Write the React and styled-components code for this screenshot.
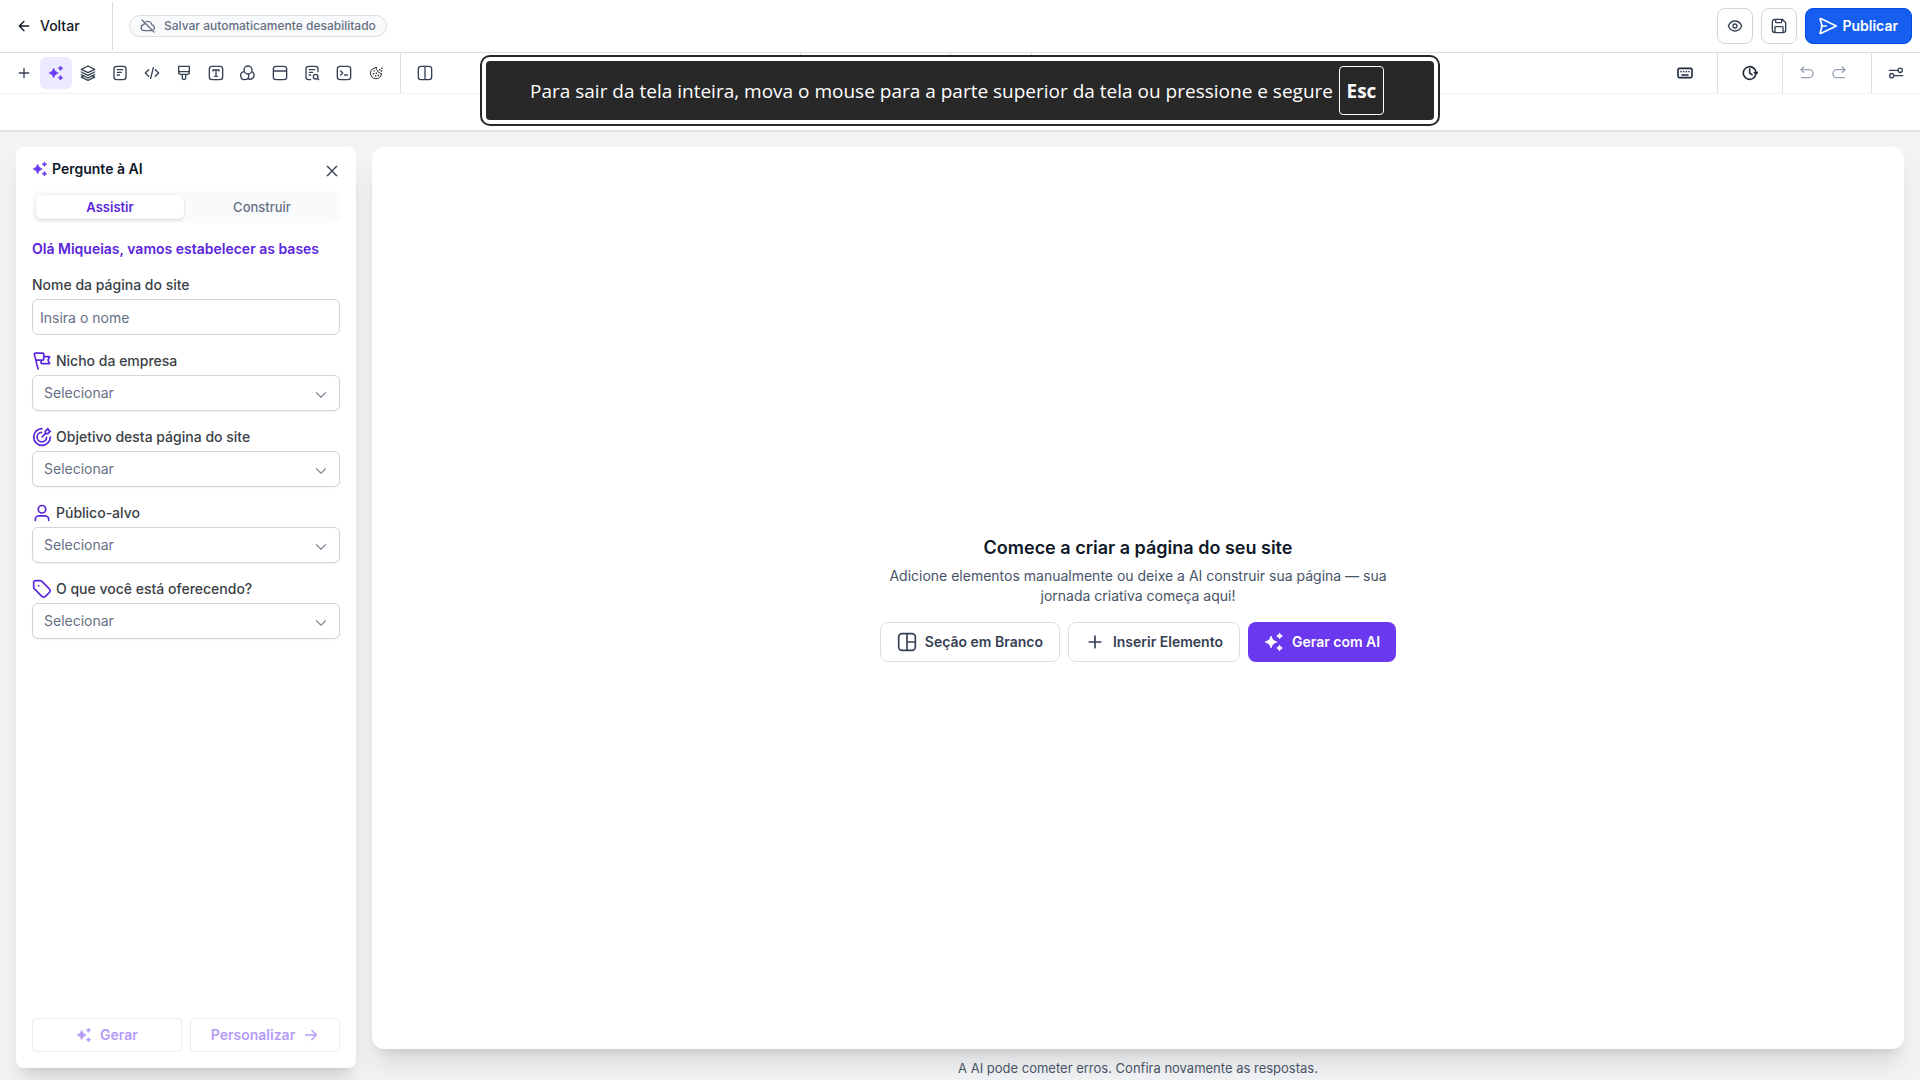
import React from "react";
import styled, { createGlobalStyle, css } from "styled-components";

const GlobalStyle = createGlobalStyle`
  *, *::before, *::after { box-sizing: border-box; }
  body {
    margin: 0;
    background: #f2f3f5;
    color: #101828;
    font-family: Inter, "Liberation Sans", sans-serif;
    font-size: 14px;
    line-height: 20px;
  }
  button, input, select { font: inherit; margin: 0; }
  button { cursor: pointer; }
  h1, h2, p { margin: 0; }
`;

const PATHS = {
  back: "M19 12H5M12 19l-7-7 7-7",
  cloudOff:
    "M3 3l18 18M9.5 5.3A7 7 0 0 1 18 10.2a4.8 4.8 0 0 1 2.8 7.3M17 19H6.5A4.5 4.5 0 0 1 6 10c.1-1.4.6-2.6 1.3-3.6",
  plus: "M12 5v14M5 12h14",
  layers:
    "M12 1.5L2 6.5l10 5 10-5zM2 10.5l10 5 10-5M2 14.5l10 5 10-5M4.5 17L2 18.2l10 4.8 10-4.8-2.5-1.2",
  page: "M7 2h10a4 4 0 0 1 4 4v12a4 4 0 0 1-4 4H7a4 4 0 0 1-4-4V6a4 4 0 0 1 4-4zM8 7h8M8 11h6M8 15h3",
  code: "M7 7l-5 5 5 5M17 7l5 5-5 5M14 4l-4 16",
  brush:
    "M4 2h16v9a3 3 0 0 1-3 3H7a3 3 0 0 1-3-3zM4 10h16M9.500 14v5.500a2.500 2.500 0 0 0 5 0V14",
  type: "M6 2h12a4 4 0 0 1 4 4v12a4 4 0 0 1-4 4H6a4 4 0 0 1-4-4V6a4 4 0 0 1 4-4zM7.500 9V7.500h9V9M12 7.500V17M10 17h4",
  colors:
    "M18 7.500A6 6 0 1 1 6 7.500a6 6 0 0 1 12 0zM6.200 10A6 6 0 1 0 13 16c0-.8-.1-1.500-.4-2.200M17.800 10A6 6 0 1 1 12 20.500",
  browser:
    "M6 2h12a4 4 0 0 1 4 4v12a4 4 0 0 1-4 4H6a4 4 0 0 1-4-4V6a4 4 0 0 1 4-4zM2 9h20",
  pageSearch:
    "M10 22H7a4 4 0 0 1-4-4V6a4 4 0 0 1 4-4h10a4 4 0 0 1 4 4v4M8 7h8M8 11h5M8 15h2M22 22l-2-2M21 17.500a3.500 3.500 0 1 1-7 0 3.500 3.500 0 0 1 7 0z",
  terminal:
    "M6 2h12a4 4 0 0 1 4 4v12a4 4 0 0 1-4 4H6a4 4 0 0 1-4-4V6a4 4 0 0 1 4-4zM7 15l3-3-3-3M13 15h4",
  columns:
    "M6 2h12a4 4 0 0 1 4 4v12a4 4 0 0 1-4 4H6a4 4 0 0 1-4-4V6a4 4 0 0 1 4-4zM12 2v20",
  eye: "M2 12c2-4.500 5.500-7.500 10-7.500S20 7.500 22 12c-2 4.500-5.500 7.500-10 7.500S4 16.500 2 12zM15 12a3 3 0 1 1-6 0 3 3 0 0 1 6 0z",
  save: "M6 2h11l5 5v11a4 4 0 0 1-4 4H6a4 4 0 0 1-4-4V6a4 4 0 0 1 4-4zM7 2v4a1 1 0 0 0 1 1h7a1 1 0 0 0 1-1V2M6 22v-8a1 1 0 0 1 1-1h10a1 1 0 0 1 1 1v8",
  send: "M10 12H4M3.800 3.200L22 12 3.800 20.800 2.500 20.500 5 12 2.500 3.500z",
  keyboard:
    "M3.500 5h17a2 2 0 0 1 2 2v10a2 2 0 0 1-2 2h-17a2 2 0 0 1-2-2V7a2 2 0 0 1 2-2zM7.500 15h9M6 10h.01M10 10h.01M14 10h.01M18 10h.01",
  history:
    "M23.200 11l-2.200 2.500-2.500-2.200M20.900 13A9.500 9.500 0 1 1 18.300 5.400q2.200 2 2.600 5.600M11.500 6v6l3.500 2.500",
  undo: "M3 7h12a6 6 0 0 1 6 6 6 6 0 0 1-6 6H4M3 7l4-4M3 7l4 4",
  redo: "M21 7H9a6 6 0 0 0-6 6 6 6 0 0 0 6 6h11M21 7l-4-4M21 7l-4 4",
  sliders: "M2 8h13M21.500 8a3.200 3.200 0 1 1-6.400 0 3.200 3.200 0 0 1 6.400 0zM22 16H9M8.900 16a3.200 3.200 0 1 1-6.400 0 3.200 3.200 0 0 1 6.400 0z",
  close: "M19 5L5 19M5 5l14 14",
  chevron: "M6 9l6 6 6-6",
  arrowRight: "M4 12h16M13 5l7 7-7 7",
  section:
    "M6 2h12a4 4 0 0 1 4 4v12a4 4 0 0 1-4 4H6a4 4 0 0 1-4-4V6a4 4 0 0 1 4-4zM12 2v20M12 12h10",
  flag:
    "M14.091 6.722H20.045C20.517 6.722 20.753 6.722 20.891 6.821C21.012 6.908 21.09 7.041 21.107 7.189C21.127 7.358 21.013 7.564 20.783 7.977L19.362 10.534C19.279 10.684 19.238 10.759 19.221 10.838C19.207 10.908 19.207 10.981 19.221 11.051C19.238 11.13 19.279 11.205 19.362 11.354L20.783 13.912C21.013 14.325 21.127 14.531 21.107 14.7C21.09 14.848 21.012 14.981 20.891 15.067C20.753 15.167 20.517 15.167 20.045 15.167H12.614C12.022 15.167 11.727 15.167 11.501 15.052C11.302 14.95 11.141 14.789 11.04 14.59C10.925 14.364 10.925 14.069 10.925 13.478V10.944M7.23 21.5L3.008 4.611M4.591 10.944H12.402C12.994 10.944 13.289 10.944 13.515 10.829C13.714 10.728 13.875 10.567 13.976 10.368C14.091 10.142 14.091 9.847 14.091 9.256V4.189C14.091 3.598 14.091 3.302 13.976 3.076C13.875 2.878 13.714 2.716 13.515 2.615C13.289 2.5 12.994 2.5 12.402 2.5H4.643C3.906 2.5 3.537 2.5 3.285 2.653C3.064 2.787 2.9 2.997 2.824 3.244C2.737 3.526 2.826 3.883 3.005 4.599L4.591 10.944Z",
  target:
    "M22 12A10 10 0 1 1 12 2M17.500 12.500A5.700 5.700 0 1 1 11.500 6.500M12 12l4-4M16 8V5l3-3 1 2 2 1-3 3z",
  user:
    "M20 21C20 19.604 20 18.907 19.828 18.339C19.44 17.06 18.44 16.06 17.161 15.672C16.593 15.5 15.896 15.5 14.5 15.5H9.5C8.104 15.5 7.407 15.5 6.839 15.672C5.56 16.06 4.56 17.06 4.172 18.339C4 18.907 4 19.604 4 21M16.5 7.5A4.5 4.5 0 1 1 7.5 7.5A4.5 4.5 0 0 1 16.5 7.5Z",
  tag:
    "M8 8H8.01M2 5.2V9.675C2 10.164 2 10.408 2.055 10.639C2.104 10.843 2.185 11.038 2.295 11.217C2.418 11.418 2.591 11.591 2.937 11.937L10.606 19.606C11.794 20.794 12.388 21.388 13.073 21.611C13.676 21.806 14.325 21.806 14.927 21.611C15.612 21.388 16.206 20.794 17.394 19.606L19.606 17.394C20.794 16.206 21.388 15.612 21.611 14.927C21.806 14.325 21.806 13.676 21.611 13.073C21.388 12.388 20.794 11.794 19.606 10.606L11.937 2.937C11.591 2.591 11.418 2.418 11.217 2.295C11.038 2.185 10.843 2.104 10.639 2.055C10.408 2 10.164 2 9.675 2H5.2C4.08 2 3.52 2 3.092 2.218C2.716 2.41 2.41 2.716 2.218 3.092C2 3.52 2 4.08 2 5.2Z",
};

const Svg = styled.svg`
  display: block;
  flex: none;
  color: ${(p) => p.$color || "currentColor"};
`;

function Icon({ name, size = 16, color, weight = 2 }) {
  return (
    <Svg
      $color={color}
      width={size}
      height={size}
      viewBox="0 0 24 24"
      fill="none"
      stroke="currentColor"
      strokeWidth={weight}
      strokeLinecap="round"
      strokeLinejoin="round"
      aria-hidden="true"
    >
      <path d={PATHS[name]} />
    </Svg>
  );
}

function Sparkles({ size = 16, color }) {
  return (
    <Svg $color={color} width={size} height={size} viewBox="0 0 24 24" fill="currentColor" aria-hidden="true">
      <path d="M8.500 5.200Q9.600 10.900 15.300 12 9.600 13.100 8.500 18.800 7.400 13.100 1.700 12 7.400 10.900 8.500 5.200z" stroke="currentColor" strokeWidth="1.4" strokeLinejoin="round" />
      <path d="M18.700 1.500Q19.300 4.200 22 4.800 19.300 5.400 18.700 8.100 18.100 5.400 15.400 4.800 18.100 4.200 18.700 1.500zM18.700 15.900Q19.300 18.600 22 19.200 19.300 19.800 18.700 22.500 18.100 19.800 15.400 19.200 18.100 18.600 18.700 15.900z" stroke="currentColor" strokeWidth="1.2" strokeLinejoin="round" />
    </Svg>
  );
}

function Cookie() {
  return (
    <Svg $color="#27272a" width="16" height="16" viewBox="0 0 24 24" fill="none" stroke="currentColor" strokeWidth="1.5" strokeLinecap="round" aria-hidden="true">
      <path d="M12.500 4A8.300 8.300 0 1 0 20.300 13c-1.600.5-2.600-.3-2.800-1.800-1.800.2-3-.8-2.700-2.500-1.900-.7-2.500-2.500-2.300-4.700z" />
      <path d="M9 8.800h.5M8 13.200h.3M12.300 12.500h.5M11.500 16.500h.3M15.500 15.500h.3M17.500 7h.3M21 4.500v.3M20 9h.3" strokeWidth="2.2" />
    </Svg>
  );
}

const Page = styled.div`
  position: relative;
  display: flex;
  flex-direction: column;
  min-height: 100vh;
`;

const Header = styled.header`
  display: flex;
  align-items: center;
  justify-content: space-between;
  height: 53px;
  padding-right: 8px;
  background: #fff;
  border-bottom: 1px solid #dcdee2;
`;

const HeaderSide = styled.div`
  display: flex;
  align-items: center;
  gap: ${(p) => p.$gap}px;
`;

const BackButton = styled.button`
  display: flex;
  align-items: center;
  gap: 8px;
  width: 113px;
  height: 48px;
  padding: 0 16px;
  border: 0;
  border-right: 1px solid #dcdee2;
  background: none;
  color: #101828;
  font-weight: 500;
`;

const StatusPill = styled.span`
  display: flex;
  align-items: center;
  gap: 8px;
  height: 22px;
  padding: 0 10px;
  border: 1px solid #dcdee2;
  border-radius: 11px;
  background: #f9fafb;
  color: #667085;
  font-size: 12px;
  font-weight: 500;
  line-height: 16px;
`;

const SquareButton = styled.button`
  display: grid;
  place-items: center;
  width: 36px;
  height: 36px;
  padding: 0;
  border: 1px solid #d0d5dd;
  border-radius: 8px;
  background: #fff;
  color: #344054;
`;

const PublishButton = styled.button`
  display: flex;
  align-items: center;
  gap: 4px;
  height: 36px;
  padding: 0 13px 0 12px;
  border: 1px solid #004eeb;
  border-radius: 8px;
  background: #155eef;
  color: #fff;
  font-weight: 600;
`;

const Toolbar = styled.nav`
  display: flex;
  height: 41px;
  background: #fff;
  border-bottom: 1px solid #f0f1f3;
`;

const ToolGroup = styled.div`
  display: flex;
  align-items: center;
  width: ${(p) => (p.$width ? p.$width + "px" : "auto")};
  padding: 0 8px;
  border-left: ${(p) => (p.$divided ? "1px solid #dcdee2" : "0")};
`;

const ToolSpacer = styled.div`
  flex: ${(p) => p.$grow} 1 0;
`;

const ToolButton = styled.button`
  display: grid;
  place-items: center;
  width: 32px;
  height: 32px;
  padding: 0;
  border: 0;
  border-radius: 6px;
  background: ${(p) => (p.$active ? "#ebe9fe" : "none")};
  color: ${(p) => (p.$active ? "#6938ef" : p.$strong ? "#1d2939" : "#344054")};
  &:disabled { color: #98a2b3; }
`;

const SubBar = styled.div`
  height: 38px;
  background: #fff;
  border-bottom: 2px solid #e0e1e3;
`;

const Workspace = styled.main`
  display: grid;
  grid-template-columns: 340px 1fr;
  gap: 16px;
  flex: 1;
  padding: 15px 16px 0;
`;

const floating = css`
  background: #fff;
  box-shadow: 0 20px 25px -5px rgba(0, 0, 0, 0.1), 0 8px 10px -6px rgba(0, 0, 0, 0.1);
`;

const Panel = styled.aside`
  ${floating}
  display: flex;
  flex-direction: column;
  margin-bottom: 12px;
  padding: 12px 16px 16px;
  border-radius: 8px;
`;

const PanelHead = styled.div`
  display: flex;
  align-items: center;
  justify-content: space-between;
  height: 20px;
`;

const PanelTitle = styled.h1`
  display: flex;
  align-items: center;
  gap: 4px;
  font-size: 14px;
  font-weight: 600;
`;

const CloseButton = styled.button`
  display: grid;
  place-items: center;
  width: 16px;
  height: 20px;
  padding: 4px 0 0;
  border: 0;
  background: none;
  color: #344054;
`;

const Tabs = styled.div`
  display: grid;
  grid-template-columns: 1fr 1fr;
  gap: 4px;
  margin-top: 12px;
  padding: 4px;
  border-radius: 6px;
  background: #f9fafb;
`;

const Tab = styled.button`
  height: 24px;
  padding: 0;
  border: 0;
  border-radius: 6px;
  background: ${(p) => (p.$active ? "#fff" : "none")};
  box-shadow: ${(p) => (p.$active ? "0 1px 3px rgba(16, 24, 40, 0.16)" : "none")};
  color: ${(p) => (p.$active ? "#5925dc" : "#667085")};
  font-size: 13px;
  font-weight: ${(p) => (p.$active ? 600 : 500)};
`;

const Greeting = styled.h2`
  margin-top: 16px;
  color: #5925dc;
  font-size: 14px;
  font-weight: 600;
`;

const Fields = styled.form`
  display: flex;
  flex-direction: column;
  gap: 16px;
  margin-top: 16px;
`;

const Field = styled.div`
  display: flex;
  flex-direction: column;
  gap: 4px;
`;

const Label = styled.label`
  display: flex;
  align-items: center;
  gap: 4px;
  color: #3a3f47;
  font-weight: 500;
`;

const control = css`
  width: 100%;
  height: 36px;
  border: 1px solid #d0d5dd;
  border-radius: 6px;
  background: #fff;
  color: #667085;
`;

const TextInput = styled.input`
  ${control}
  padding: 0 7px;
  &::placeholder { color: #667085; opacity: 1; }
`;

const SelectWrap = styled.div`
  display: grid;
  align-items: center;
  > * { grid-area: 1 / 1; }
  > svg { justify-self: end; margin: 4px 10px 0 0; pointer-events: none; }
`;

const Select = styled.select`
  ${control}
  appearance: none;
  padding: 0 32px 0 11px;
  box-shadow: 0 1px 2px rgba(16, 24, 40, 0.05);
`;

const PanelActions = styled.div`
  display: grid;
  grid-template-columns: 1fr 1fr;
  gap: 8px;
  margin-top: auto;
`;

const GhostButton = styled.button`
  display: flex;
  align-items: center;
  justify-content: center;
  gap: 8px;
  height: 34px;
  border: 1px solid #ededf0;
  border-radius: 4px;
  background: #fff;
  color: #b49bf7;
  font-weight: 600;
`;

const Stage = styled.section`
  display: flex;
  flex-direction: column;
`;

const Canvas = styled.div`
  ${floating}
  display: flex;
  flex: 1;
  flex-direction: column;
  align-items: center;
  justify-content: center;
  border-radius: 12px;
`;

const EmptyTitle = styled.h2`
  font-size: 18px;
  font-weight: 600;
  line-height: 28px;
`;

const EmptyText = styled.p`
  max-width: 512px;
  margin-top: 4px;
  color: #475467;
  text-align: center;
`;

const Choices = styled.div`
  display: flex;
  gap: 8px;
  margin-top: 16px;
`;

const ChoiceButton = styled.button`
  display: flex;
  align-items: center;
  gap: 8px;
  height: 40px;
  padding: 0 16px;
  border: ${(p) => (p.$primary ? "0" : "1px solid #dcdee5")};
  border-radius: 8px;
  background: ${(p) => (p.$primary ? "#6938ef" : "#fff")};
  color: ${(p) => (p.$primary ? "#fff" : "#344054")};
  font-weight: 600;
`;

const Disclaimer = styled.footer`
  padding: 9px 0 2px;
  color: #475467;
  font-size: 13px;
  text-align: center;
`;

const FullscreenNotice = styled.div`
  position: absolute;
  top: 55px;
  left: 50%;
  display: flex;
  width: 960px;
  height: 71px;
  padding: 4px;
  border: 2px solid #282828;
  border-radius: 10px;
  background: #fff;
  transform: translateX(-50%);
`;

const NoticeBody = styled.div`
  display: flex;
  flex: 1;
  align-items: center;
  gap: 6px;
  padding-left: 44px;
  border-radius: 4px;
  background: #282828;
  color: #fff;
  font-family: "Open Sans", "Noto Sans", sans-serif;
  font-size: 19px;
  line-height: 28px;
`;

const Key = styled.kbd`
  display: grid;
  place-items: center;
  width: 45px;
  height: 49px;
  border: 1px solid #fff;
  border-radius: 4px;
  font-family: inherit;
  font-weight: 700;
`;

const TOOLS = [
  ["Adicionar", "plus"],
  ["Pergunte à AI", "sparkles"],
  ["Camadas", "layers"],
  ["Páginas", "page"],
  ["Código", "code"],
  ["Estilos", "brush"],
  ["Tipografia", "type"],
  ["Cores", "colors"],
  ["Pop-ups", "browser"],
  ["SEO", "pageSearch"],
  ["Scripts", "terminal"],
  ["Cookies", "cookie"],
];

const QUESTIONS = [
  ["niche", "flag", "Nicho da empresa"],
  ["goal", "target", "Objetivo desta página do site"],
  ["audience", "user", "Público-alvo"],
  ["offer", "tag", "O que você está oferecendo?"],
];

function ToolGlyph({ name, weight }) {
  if (name === "sparkles") return <Sparkles />;
  if (name === "cookie") return <Cookie />;
  return <Icon name={name} weight={weight} />;
}

function Tool({ label, name, active, strong, disabled }) {
  return (
    <ToolButton type="button" aria-label={label} $active={active} $strong={strong} disabled={disabled}>
      <ToolGlyph name={name} weight={strong ? 2.4 : 2} />
    </ToolButton>
  );
}

export default function App() {
  return (
    <Page>
      <GlobalStyle />
      <Header>
        <HeaderSide $gap={16}>
          <BackButton type="button">
            <Icon name="back" />
            Voltar
          </BackButton>
          <StatusPill>
            <Icon name="cloudOff" />
            Salvar automaticamente desabilitado
          </StatusPill>
        </HeaderSide>
        <HeaderSide $gap={8}>
          <SquareButton type="button" aria-label="Visualizar">
            <Icon name="eye" />
          </SquareButton>
          <SquareButton type="button" aria-label="Salvar">
            <Icon name="save" />
          </SquareButton>
          <PublishButton type="button">
            <Icon name="send" size={20} />
            Publicar
          </PublishButton>
        </HeaderSide>
      </Header>

      <Toolbar>
        <ToolGroup $width={400}>
          {TOOLS.map(([label, name]) => (
            <Tool key={name} label={label} name={name} active={name === "sparkles"} />
          ))}
        </ToolGroup>
        <ToolGroup $divided>
          <Tool label="Colunas" name="columns" />
        </ToolGroup>
        <ToolSpacer $grow={35} />
        <ToolGroup $divided $width={150} />
        <ToolGroup $divided $width={81} />
        <ToolGroup $divided $width={1} />
        <ToolSpacer $grow={61} />
        <ToolGroup $width={56}>
          <Tool label="Atalhos do teclado" name="keyboard" strong />
        </ToolGroup>
        <ToolGroup $divided $width={65}>
          <ToolSpacer $grow={1} />
          <Tool label="Histórico de versões" name="history" strong />
          <ToolSpacer $grow={1} />
        </ToolGroup>
        <ToolGroup $divided $width={89}>
          <Tool label="Desfazer" name="undo" disabled />
          <Tool label="Refazer" name="redo" disabled />
        </ToolGroup>
        <ToolGroup $divided>
          <Tool label="Configurações" name="sliders" />
        </ToolGroup>
      </Toolbar>
      <SubBar />

      <Workspace>
        <Panel>
          <PanelHead>
            <PanelTitle>
              <Sparkles color="#6938ef" />
              Pergunte à AI
            </PanelTitle>
            <CloseButton type="button" aria-label="Fechar">
              <Icon name="close" />
            </CloseButton>
          </PanelHead>
          <Tabs role="tablist">
            <Tab type="button" role="tab" aria-selected="true" $active>Assistir</Tab>
            <Tab type="button" role="tab" aria-selected="false">Construir</Tab>
          </Tabs>
          <Greeting>Olá Miqueias, vamos estabelecer as bases</Greeting>
          <Fields>
            <Field>
              <Label htmlFor="page-name">Nome da página do site</Label>
              <TextInput id="page-name" type="text" placeholder="Insira o nome" />
            </Field>
            {QUESTIONS.map(([id, icon, label]) => (
              <Field key={id}>
                <Label htmlFor={id}>
                  <Icon name={icon} size={20} color="#5925dc" />
                  {label}
                </Label>
                <SelectWrap>
                  <Select id={id} defaultValue="">
                    <option value="">Selecionar</option>
                  </Select>
                  <Icon name="chevron" size={18} color="#858d9d" weight={1.6} />
                </SelectWrap>
              </Field>
            ))}
          </Fields>
          <PanelActions>
            <GhostButton type="button">
              <Sparkles />
              Gerar
            </GhostButton>
            <GhostButton type="button">
              Personalizar
              <Icon name="arrowRight" />
            </GhostButton>
          </PanelActions>
        </Panel>

        <Stage>
          <Canvas>
            <EmptyTitle>Comece a criar a página do seu site</EmptyTitle>
            <EmptyText>
              Adicione elementos manualmente ou deixe a AI construir sua página — sua jornada criativa começa aqui!
            </EmptyText>
            <Choices>
              <ChoiceButton type="button">
                <Icon name="section" size={20} />
                Seção em Branco
              </ChoiceButton>
              <ChoiceButton type="button">
                <Icon name="plus" size={20} />
                Inserir Elemento
              </ChoiceButton>
              <ChoiceButton type="button" $primary>
                <Sparkles size={20} />
                Gerar com AI
              </ChoiceButton>
            </Choices>
          </Canvas>
          <Disclaimer>A AI pode cometer erros. Confira novamente as respostas.</Disclaimer>
        </Stage>
      </Workspace>

      <FullscreenNotice role="status">
        <NoticeBody>
          <span>Para sair da tela inteira, mova o mouse para a parte superior da tela ou pressione e segure</span>
          <Key>Esc</Key>
        </NoticeBody>
      </FullscreenNotice>
    </Page>
  );
}
